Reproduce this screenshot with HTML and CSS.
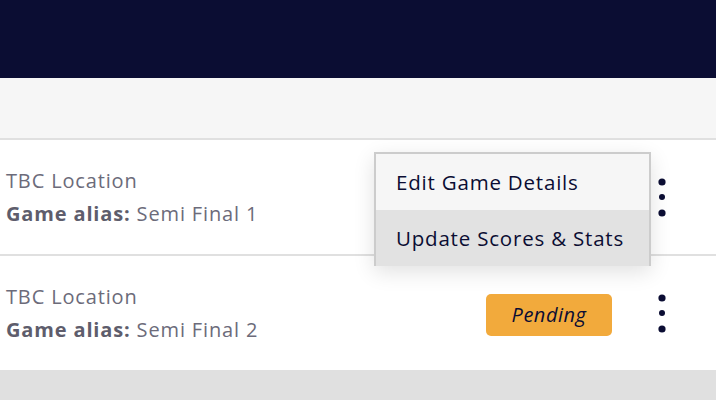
FILE: index.html
```html
<!DOCTYPE html>
<html lang="en">
<head>
<meta charset="utf-8">
<title>Games</title>
<link rel="stylesheet" href="styles.css">
</head>
<body>
<header class="topbar"></header>
<div class="toolbar"></div>
<div class="list">
  <div class="row">
    <div class="info">
      <div class="line">TBC Location</div>
      <div class="line"><span class="label">Game alias:</span> Semi Final 1</div>
    </div>
    <div class="actions">
      <button class="kebab" aria-label="More actions">
        <svg width="10" height="40" viewBox="0 0 10 40"><circle cx="5" cy="5" r="3.6"/><circle cx="5" cy="20" r="3"/><circle cx="5" cy="36" r="3.6"/></svg>
      </button>
    </div>
    <div class="menu">
      <div class="menu-item">Edit Game Details</div>
      <div class="menu-item active">Update Scores &amp; Stats</div>
    </div>
  </div>
  <div class="row">
    <div class="info">
      <div class="line">TBC Location</div>
      <div class="line"><span class="label">Game alias:</span> Semi Final 2</div>
    </div>
    <div class="actions">
      <span class="badge">Pending</span>
      <button class="kebab" aria-label="More actions">
        <svg width="10" height="40" viewBox="0 0 10 40"><circle cx="5" cy="5" r="3.6"/><circle cx="5" cy="20" r="3"/><circle cx="5" cy="36" r="3.6"/></svg>
      </button>
    </div>
  </div>
</div>
<div class="bottom-band"></div>
</body>
</html>
```
FILE: styles.css
```css
* { box-sizing: border-box; }
html, body { margin: 0; padding: 0; }
body {
  width: 716px;
  height: 400px;
  overflow: hidden;
  background: #ffffff;
  font-family: "Open Sans", "Liberation Sans", sans-serif;
}
.topbar {
  height: 78px;
  background: #0b0d33;
}
.toolbar {
  height: 62px;
  background: #f6f6f6;
  border-bottom: 2px solid #e0e0e0;
}
.row {
  position: relative;
  height: 116px;
  display: flex;
  align-items: center;
  justify-content: space-between;
  padding: 0 42px 0 6px;
  border-bottom: 2px solid #e0e0e0;
}
.info {
  display: flex;
  flex-direction: column;
}
.line {
  font-size: 20px;
  line-height: 33px;
  color: #6c6b7a;
  letter-spacing: 0.85px;
}
.label {
  font-weight: 700;
  color: #5e5d6c;
}
.actions {
  display: flex;
  align-items: center;
}
.badge {
  width: 126px;
  height: 42px;
  display: flex;
  align-items: center;
  justify-content: center;
  background: #f2aa3c;
  border-radius: 5px;
  color: #0b0d33;
  font-style: italic;
  font-size: 20px;
  letter-spacing: 0.5px;
  margin: 3px 38px 0 0;
}
.kebab {
  width: 24px;
  height: 44px;
  padding: 0;
  border: 0;
  background: transparent;
  display: flex;
  align-items: center;
  justify-content: center;
  fill: #0b0d33;
}
.menu {
  position: absolute;
  top: 12px;
  right: 65px;
  width: 277px;
  z-index: 5;
  border: 2px solid #cccccc;
  border-bottom: 0;
  background: #f6f6f6;
  box-shadow: 0 6px 20px rgba(0, 0, 0, 0.12);
}
.menu-item {
  height: 56px;
  display: flex;
  align-items: center;
  padding-left: 20px;
  font-size: 20.5px;
  color: #0b0d33;
  letter-spacing: 0.8px;
}
.menu-item.active {
  background: #e2e2e2;
}
.bottom-band {
  height: 30px;
  background: #e0e0e0;
}
```
